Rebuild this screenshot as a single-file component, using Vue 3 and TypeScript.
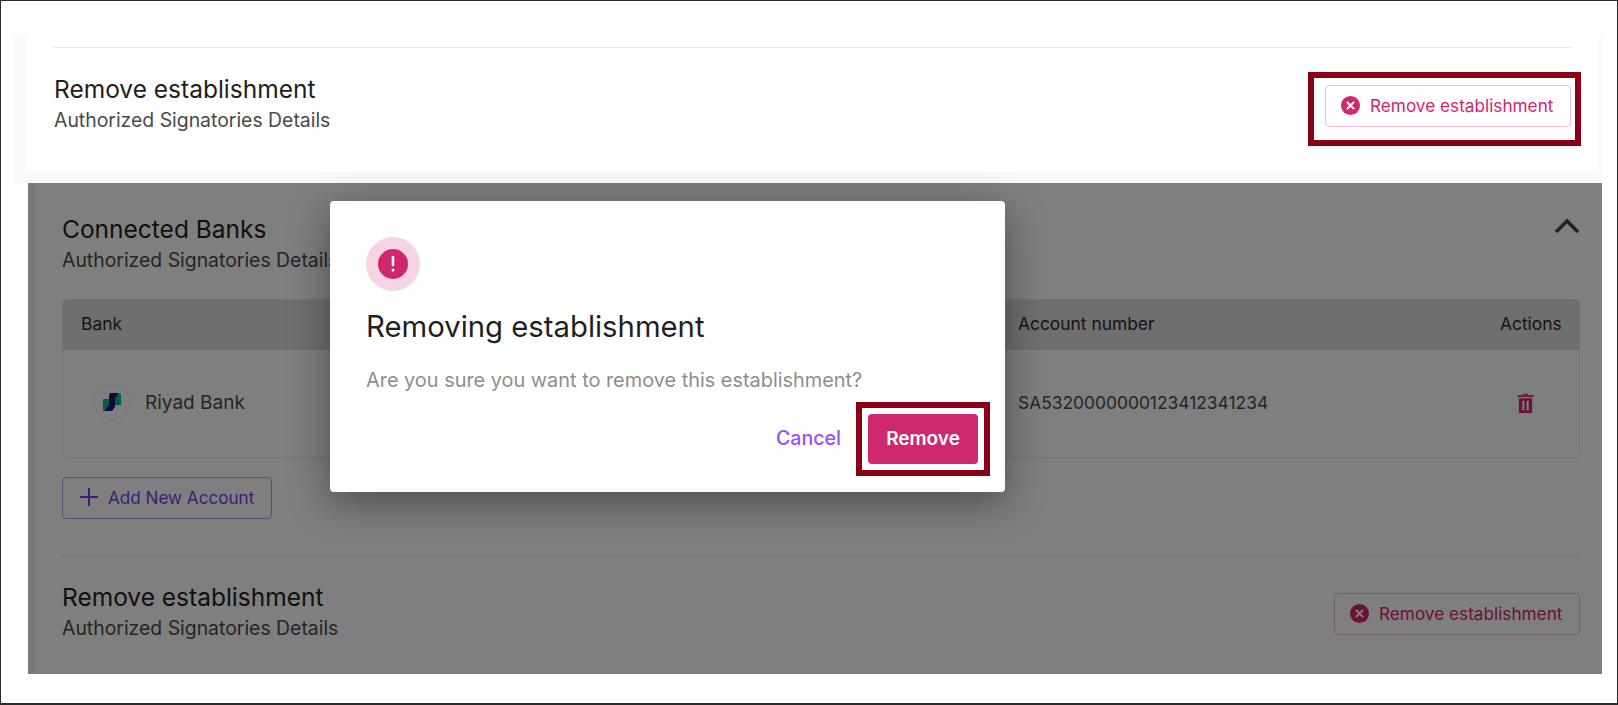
<script setup lang="ts">
const subtitle = 'Authorized Signatories Details'
</script>

<template>
  <div class="frame">
    <div class="top-shell">
      <section class="top-card">
        <div class="rule"></div>
        <div class="split top-split">
          <div>
            <h2 class="title">Remove establishment</h2>
            <p class="sub">{{ subtitle }}</p>
          </div>
          <div class="callout callout-top">
            <button class="outline-btn">
              <svg class="x-icon" viewBox="0 0 20 20"><circle cx="10" cy="10" r="10" fill="#d0266f"/><path d="M6.8 6.8l6.4 6.4M13.2 6.8l-6.4 6.4" stroke="#fff" stroke-width="2" stroke-linecap="round"/></svg>
              Remove establishment
            </button>
          </div>
        </div>
      </section>
    </div>

    <section class="panel">
      <div class="panel-inner">
        <div class="split head">
          <div>
            <h2 class="title">Connected Banks</h2>
            <p class="sub">{{ subtitle }}</p>
          </div>
          <svg class="chevron" viewBox="0 0 26 16"><path d="M2 14L13 3l11 11" fill="none" stroke="#444" stroke-width="3.4"/></svg>
        </div>

        <div class="table">
          <div class="thead">
            <span>Bank</span>
            <span>Account number</span>
            <span>Actions</span>
          </div>
          <div class="trow">
            <span class="bank">
              <span class="logo">
                <svg viewBox="0 0 18 18" width="18" height="18"><path d="M0 6h6v6l-5 6H0z" fill="#12b594"/><path d="M12 1h6v11h-6z" fill="#12b594"/><path d="M7 0h9l-4 5v9l-3 4H1l5-6V3z" fill="#1c1078"/></svg>
              </span>
              Riyad Bank
            </span>
            <span class="iban">SA5320000000123412341234</span>
            <span class="trash-cell">
              <svg class="trash" viewBox="0 0 18 21"><path d="M6 2.4C6 1 7 .4 9 .4s3 .6 3 2h5.5v1.8H.5V2.4zM7.3 2.4h3.4C10.7 1.9 10 1.6 9 1.6s-1.700.3-1.700.8zM2 5.6h14V21H2zM5.600 8.200v10h2.200v-10zm4.600 0v10h2.200v-10z" fill="#d0266f" fill-rule="evenodd"/></svg>
            </span>
          </div>
        </div>

        <button class="add-btn">
          <svg viewBox="0 0 20 20" width="20" height="20"><path d="M10 1v18M1 10h18" stroke="#7c3aed" stroke-width="2"/></svg>
          Add New Account
        </button>

        <div class="rule panel-rule"></div>

        <div class="split bottom-split">
          <div class="bottom-text">
            <h2 class="title">Remove establishment</h2>
            <p class="sub">{{ subtitle }}</p>
          </div>
          <button class="outline-btn">
            <svg class="x-icon" viewBox="0 0 20 20"><circle cx="10" cy="10" r="10" fill="#d0266f"/><path d="M6.8 6.8l6.4 6.4M13.2 6.8l-6.4 6.4" stroke="#fff" stroke-width="2" stroke-linecap="round"/></svg>
            Remove establishment
          </button>
        </div>
      </div>
      <div class="scrim"></div>
    </section>

    <div class="modal" role="dialog">
      <div class="alert-ring">
        <span class="alert-dot">
          <svg viewBox="0 0 4 16" width="4" height="16"><path d="M2 1v8" stroke="#fff" stroke-width="2.6" stroke-linecap="round"/><circle cx="2" cy="14" r="1.5" fill="#fff"/></svg>
        </span>
      </div>
      <h3 class="modal-title">Removing establishment</h3>
      <p class="modal-text">Are you sure you want to remove this establishment?</p>
      <div class="modal-actions">
        <button class="cancel">Cancel</button>
        <div class="callout callout-modal">
          <button class="remove">Remove</button>
        </div>
      </div>
    </div>
  </div>
</template>

<style>
html, body { margin: 0; background: #fff; }
</style>

<style scoped>
* { box-sizing: border-box; }
.frame {
  position: relative;
  height: 705px;
  width: 1618px;
  overflow: hidden;
  padding-top: 34px;
  border: 1px solid #2b2b2b;
  border-bottom-width: 2px;
  background: #fff;
  font-family: Inter, Roboto, sans-serif;
  color: #1e1e1e;
}
p, h2, h3 { margin: 0; font-weight: 400; }
button { font-family: inherit; cursor: pointer; background: none; }
.top-shell {
  margin-left: 13px;
  width: 1588px;
  padding: 0 3px 11px 12px;
  background: #f9f9f9;
}
.top-card {
  height: 137px;
  padding: 12px 27px 0 27px;
  background: #fff;
}
.rule { height: 1px; background: #e8e8e8; }
.split { display: flex; justify-content: space-between; }
.top-split { align-items: flex-start; padding: 27px 0 0 1px; }
.title { font-size: 24.5px; line-height: 28px; color: #1e1e1e; }
.sub { font-size: 19.4px; line-height: 24px; margin-top: 5px; color: #4a4a4a; }
.callout { border: 6px solid #8b0014; background: #fff; }
.callout-top {
  position: absolute;
  left: 1307px;
  top: 71px;
  width: 273px;
  height: 74px;
  padding: 7px 3px 0 11px;
}
.outline-btn {
  display: flex;
  align-items: center;
  gap: 10px;
  width: 246px;
  height: 42px;
  padding: 0 0 2px 15px;
  border: 1.5px solid #f5bcd5;
  border-radius: 4px;
  font-size: 17.2px;
  color: #d0266f;
  white-space: nowrap;
}
.x-icon { width: 19px; height: 19px; flex: none; }
.panel {
  position: relative;
  margin-left: 27px;
  width: 1574px;
  height: 491px;
  background: #fff;
}
.panel::before {
  content: "";
  position: absolute;
  left: 0;
  top: 0;
  bottom: 0;
  width: 7px;
  background: #f0f0f0;
}
.panel-inner { padding: 32px 22px 0 34px; }
.head { align-items: flex-start; }
.chevron { width: 26px; height: 16px; margin-top: 3px; }
.table {
  margin-top: 27px;
  border-radius: 5px;
  border: 1px solid #e6e6e6;
  overflow: hidden;
}
.thead, .trow { display: grid; align-items: center; }
.thead {
  grid-template-columns: 937px 1fr 62px;
  height: 50px;
  padding: 0 17px 3px 18px;
  background: #dedede;
  font-size: 17.4px;
  color: #2a2a2a;
}
.trow {
  grid-template-columns: 924px 1fr 62px;
  height: 107px;
  padding: 0 17px 3px 31px;
  font-size: 19px;
  color: #4a4a4a;
}
.bank { display: flex; align-items: center; gap: 15px; }
.logo {
  display: flex;
  align-items: center;
  justify-content: center;
  width: 36px;
  height: 36px;
  border-radius: 50%;
  border: 1px solid #ececec;
}
.iban { font-size: 17.4px; }
.trash-cell { display: flex; justify-content: center; padding: 2px 12px 0 0; }
.trash { width: 17px; height: 20px; display: block; }
.add-btn {
  display: flex;
  align-items: center;
  gap: 9px;
  margin-top: 19px;
  width: 210px;
  height: 42px;
  padding: 0 0 2px 16px;
  border: 1.5px solid #b898f0;
  border-radius: 4px;
  font-size: 17.1px;
  color: #7c3aed;
}
.panel-rule { margin-top: 36px; }
.bottom-split { align-items: flex-start; }
.bottom-text { padding-top: 27px; }
.bottom-split .outline-btn { margin-top: 37px; }
.scrim { position: absolute; inset: 0; background: rgba(0, 0, 0, 0.5); }
.modal {
  position: absolute;
  left: 329px;
  top: 200px;
  width: 675px;
  height: 291px;
  padding: 36px 36px 0 36px;
  background: #fff;
  border-radius: 4px;
  box-shadow: 0 10px 40px rgba(0, 0, 0, 0.4);
}
.alert-ring {
  display: flex;
  align-items: center;
  justify-content: center;
  width: 54px;
  height: 54px;
  border-radius: 50%;
  background: #f5d5e4;
}
.alert-dot {
  display: flex;
  align-items: center;
  justify-content: center;
  width: 30px;
  height: 30px;
  border-radius: 50%;
  background: #d0266f;
}
.modal-title { margin-top: 17px; font-size: 29.3px; line-height: 38px; color: #1f1f1f; }
.modal-text { margin-top: 22px; font-size: 19.9px; line-height: 24px; color: #8e8e8e; }
.modal-actions {
  display: flex;
  justify-content: flex-end;
  align-items: center;
  margin-top: 10px;
  margin-right: -21px;
  gap: 15px;
}
.cancel { border: 0; padding: 0 0 2px; font-size: 19.6px; font-weight: 500; color: #9b4dff; }
.callout-modal { width: 134px; height: 74px; padding: 6px; }
.remove {
  display: block;
  width: 110px;
  height: 50px;
  border: 0;
  padding: 0 0 2px;
  border-radius: 4px;
  background: #cf2770;
  color: #fff;
  font-size: 19px;
  font-weight: 600;
}
</style>
